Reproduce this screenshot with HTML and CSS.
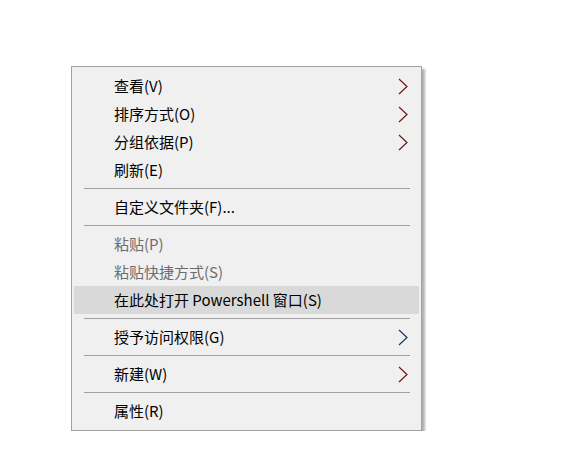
FILE: index.html
```html
<!DOCTYPE html>
<html lang="zh-CN">
<head>
<meta charset="utf-8">
<title>Context menu</title>
<link rel="stylesheet" href="styles.css">
</head>
<body>
<div class="menu">
  <div class="item"><span>查看(V)</span><svg class="arrow red" viewBox="0 0 10 17"><path d="M1 1 L9 8.5 L1 16"/></svg></div>
  <div class="item"><span>排序方式(O)</span><svg class="arrow red" viewBox="0 0 10 17"><path d="M1 1 L9 8.5 L1 16"/></svg></div>
  <div class="item"><span>分组依据(P)</span><svg class="arrow red" viewBox="0 0 10 17"><path d="M1 1 L9 8.5 L1 16"/></svg></div>
  <div class="item"><span>刷新(E)</span></div>
  <div class="sep"></div>
  <div class="item"><span>自定义文件夹(F)...</span></div>
  <div class="sep"></div>
  <div class="item disabled"><span>粘贴(P)</span></div>
  <div class="item disabled"><span>粘贴快捷方式(S)</span></div>
  <div class="item hover"><span>在此处打开 Powershell 窗口(S)</span></div>
  <div class="sep"></div>
  <div class="item"><span>授予访问权限(G)</span><svg class="arrow blue" viewBox="0 0 10 17"><path d="M1 1 L9 8.5 L1 16"/></svg></div>
  <div class="sep"></div>
  <div class="item"><span>新建(W)</span><svg class="arrow red" viewBox="0 0 10 17"><path d="M1 1 L9 8.5 L1 16"/></svg></div>
  <div class="sep"></div>
  <div class="item"><span>属性(R)</span></div>
</div>
</body>
</html>
```
FILE: styles.css
```css
html, body {
  margin: 0;
  padding: 0;
  background: #ffffff;
}
body {
  font-family: "Noto Sans CJK SC", "Noto Sans", sans-serif;
  font-size: 15px;
  color: #000;
}
.menu {
  margin: 66px 0 0 71px;
  width: 349px;
  border: 1px solid #a0a0a0;
  background: #f0f0f0;
  padding: 5px 0;
  box-shadow: 3px 3px 2px rgba(0, 0, 0, 0.3);
}
.item {
  height: 28px;
  margin: 0 2px;
  padding: 0 11px 0 40px;
  display: flex;
  align-items: center;
  justify-content: space-between;
  line-height: 28px;
  white-space: nowrap;
}
.item span {
  display: block;
  margin-top: -1px;
}
.item.hover {
  background: #d9d9d9;
}
.item.disabled {
  color: #6d6d6d;
}
.sep {
  height: 1px;
  background: #a0a0a0;
  margin: 4px 11px 4px 12px;
}
.arrow {
  width: 10px;
  height: 17px;
  fill: none;
  stroke-width: 1.2;
}
.arrow.red {
  stroke: #6a1a1a;
}
.arrow.blue {
  stroke: #1a3a5a;
}
```
